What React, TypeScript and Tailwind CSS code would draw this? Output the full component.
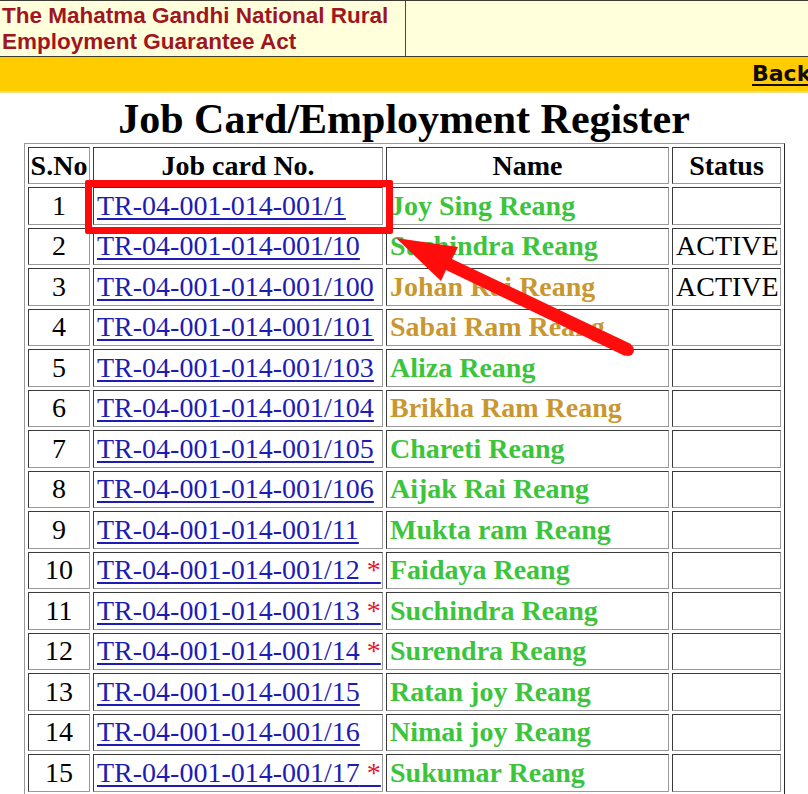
import React from 'react';

type Row = {
  sno: number;
  card: string;
  star?: boolean;
  name: string;
  tone: 'green' | 'gold';
  status?: string;
};

const rows: Row[] = [
  { sno: 1, card: 'TR-04-001-014-001/1', name: 'Joy Sing Reang', tone: 'green' },
  { sno: 2, card: 'TR-04-001-014-001/10', name: 'Suchindra Reang', tone: 'green', status: 'ACTIVE' },
  { sno: 3, card: 'TR-04-001-014-001/100', name: 'Johan Rai Reang', tone: 'gold', status: 'ACTIVE' },
  { sno: 4, card: 'TR-04-001-014-001/101', name: 'Sabai Ram Reang', tone: 'gold' },
  { sno: 5, card: 'TR-04-001-014-001/103', name: 'Aliza Reang', tone: 'green' },
  { sno: 6, card: 'TR-04-001-014-001/104', name: 'Brikha Ram Reang', tone: 'gold' },
  { sno: 7, card: 'TR-04-001-014-001/105', name: 'Chareti Reang', tone: 'green' },
  { sno: 8, card: 'TR-04-001-014-001/106', name: 'Aijak Rai Reang', tone: 'green' },
  { sno: 9, card: 'TR-04-001-014-001/11', name: 'Mukta ram Reang', tone: 'green' },
  { sno: 10, card: 'TR-04-001-014-001/12', star: true, name: 'Faidaya Reang', tone: 'green' },
  { sno: 11, card: 'TR-04-001-014-001/13', star: true, name: 'Suchindra Reang', tone: 'green' },
  { sno: 12, card: 'TR-04-001-014-001/14', star: true, name: 'Surendra Reang', tone: 'green' },
  { sno: 13, card: 'TR-04-001-014-001/15', name: 'Ratan joy Reang', tone: 'green' },
  { sno: 14, card: 'TR-04-001-014-001/16', name: 'Nimai joy Reang', tone: 'green' },
  { sno: 15, card: 'TR-04-001-014-001/17', star: true, name: 'Sukumar Reang', tone: 'green' },
];

// inset cell border, like an old border=1 table
const cell = 'border border-t-[#3a3a3a] border-l-[#3a3a3a] border-b-[#9a9a9a] border-r-[#9a9a9a] bg-white';

export default function App() {
  return (
    <div className="relative w-[808px] h-[794px] overflow-hidden bg-white">
      {/* Top header */}
      <div className="flex h-[57px] border-t border-b border-[#3b3b33] bg-[#ffffdc]">
        <div className="w-[406px] border-r border-[#4a4a40] pl-[2px] pt-[2px] font-['Liberation_Sans',Arial,sans-serif] font-bold text-[22.5px] leading-[26px] text-[#a0151f]">
          The Mahatma Gandhi National Rural
          <br />
          Employment Guarantee Act
        </div>
        <div className="flex-1" />
      </div>

      {/* Yellow bar */}
      <div className="h-[36px] bg-[#ffcc00] border-b-2 border-[#f5df7a] whitespace-nowrap pl-[752px] pt-[3px]">
        <a className="font-['DejaVu_Sans',Verdana,sans-serif] font-bold text-[22px] leading-[28px] text-[#140a00] underline decoration-2 underline-offset-[3px]">
          Back
        </a>
      </div>

      {/* Title */}
      <h2 className="h-[50px] pt-[3px] text-center font-['Liberation_Serif','Times_New_Roman',serif] font-bold text-[42px] leading-[47px] text-black">
        Job Card/Employment Register
      </h2>

      {/* Register table */}
      <table className="ml-[24px] w-[761px] table-fixed border-separate border-spacing-[3px] border border-t-[#9a9a9a] border-l-[#9a9a9a] border-b-[#2a2a2a] border-r-[#2a2a2a] font-['Liberation_Serif','Times_New_Roman',serif] text-[28px] text-black">
        <thead>
          <tr className="h-[37px]">
            <th className={`${cell} w-[62px] p-0 font-bold leading-none`}>S.No</th>
            <th className={`${cell} w-[290px] p-0 font-bold leading-none`}>Job card No.</th>
            <th className={`${cell} w-[283px] p-0 font-bold leading-none`}>Name</th>
            <th className={`${cell} w-[109px] p-0 font-bold leading-none`}>Status</th>
          </tr>
        </thead>
        <tbody>
          {rows.map((r) => (
            <tr key={r.sno} className="h-[37.5px]">
              <td className={`${cell} p-0 text-center leading-none`}>{r.sno}</td>
              <td className={`${cell} p-0 pl-[3px] leading-none whitespace-nowrap`}>
                <a className="text-[#1d1cb4] underline decoration-2 underline-offset-[3px]">
                  {r.card}
                  {r.star && <span className="text-[#e3172b]"> *</span>}
                </a>
              </td>
              <td
                className={`${cell} p-0 pl-[3px] font-bold leading-none whitespace-nowrap ${
                  r.tone === 'green' ? 'text-[#3cc43c]' : 'text-[#c9972f]'
                }`}
              >
                {r.name}
              </td>
              <td className={`${cell} p-0 pl-[3px] leading-none whitespace-nowrap`}>{r.status ?? ''}</td>
            </tr>
          ))}
        </tbody>
      </table>

      {/* Highlight box around the first job card */}
      <div className="absolute left-[85px] top-[180px] w-[308px] h-[54px] border-[7px] border-[#ff0a0a] rounded-[2px] pointer-events-none" />

      {/* Pointer arrow */}
      <svg className="absolute left-0 top-0 pointer-events-none" width="808" height="794" viewBox="0 0 808 794">
        <polygon
          fill="#ff0d0d"
          points="396,238 458,247 452,259 631,344 625,356 446,270 441,281"
        />
        <circle cx="628" cy="350" r="6" fill="#ff0d0d" />
      </svg>
    </div>
  );
}
